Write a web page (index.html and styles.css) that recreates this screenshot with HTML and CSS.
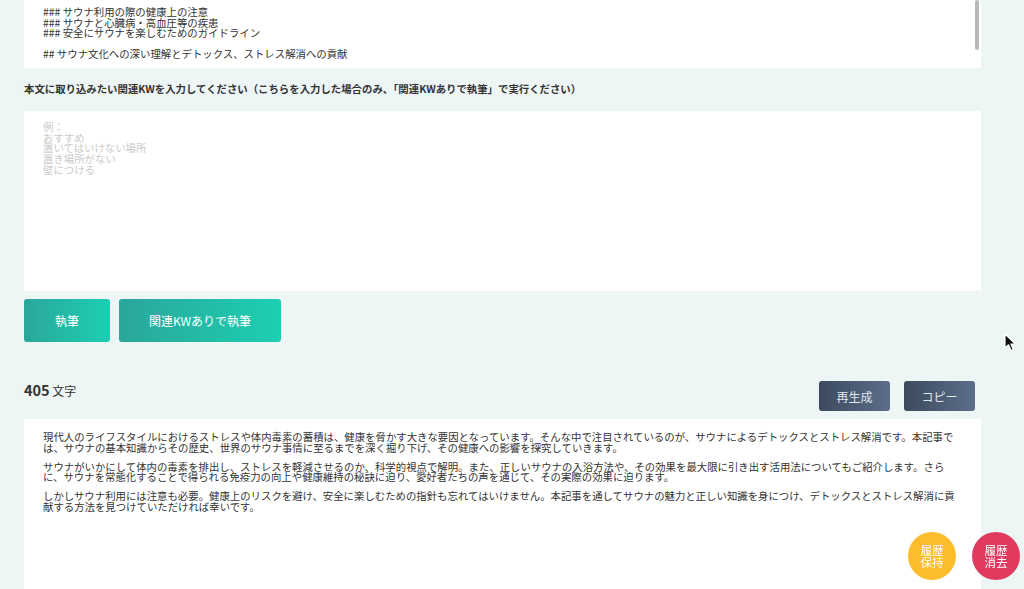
FILE: index.html
```html
<!DOCTYPE html>
<html>
<head>
    <title>記事執筆</title>
    <link rel="stylesheet" href="styles.css">
</head>
<body>
    <div class="container">
        <div class="outline-box">
            <div class="outline-text">### サウナ利用の際の健康上の注意
### サウナと心臓病・高血圧等の疾患
### 安全にサウナを楽しむためのガイドライン

## サウナ文化への深い理解とデトックス、ストレス解消への貢献</div>
            <div class="scroll-thumb"></div>
        </div>

        <label class="kw-label" for="kwInput">本文に取り込みたい関連KWを入力してください（こちらを入力した場合のみ、「関連KWありで執筆」で実行ください）</label>
        <textarea id="kwInput" class="kw-input" placeholder="例：&#10;おすすめ&#10;置いてはいけない場所&#10;置き場所がない&#10;壁につける"></textarea>

        <div class="action-row">
            <button class="btn-primary btn-write">執筆</button>
            <button class="btn-primary btn-write-kw">関連KWありで執筆</button>
        </div>

        <div class="result-header">
            <div class="char-count"><span class="count-num">405</span> 文字</div>
            <div class="result-actions">
                <button class="btn-dark">再生成</button>
                <button class="btn-dark">コピー</button>
            </div>
        </div>

        <div class="result-box">
            <p>現代人のライフスタイルにおけるストレスや体内毒素の蓄積は、健康を脅かす大きな要因となっています。そんな中で注目されているのが、サウナによるデトックスとストレス解消です。本記事では、サウナの基本知識からその歴史、世界のサウナ事情に至るまでを深く掘り下げ、その健康への影響を探究していきます。</p>
            <p>サウナがいかにして体内の毒素を排出し、ストレスを軽減させるのか、科学的視点で解明。また、正しいサウナの入浴方法や、その効果を最大限に引き出す活用法についてもご紹介します。さらに、サウナを常態化することで得られる免疫力の向上や健康維持の秘訣に迫り、愛好者たちの声を通じて、その実際の効果に迫ります。</p>
            <p>しかしサウナ利用には注意も必要。健康上のリスクを避け、安全に楽しむための指針も忘れてはいけません。本記事を通してサウナの魅力と正しい知識を身につけ、デトックスとストレス解消に貢献する方法を見つけていただければ幸いです。</p>
        </div>
    </div>

    <div class="history-buttons">
        <button class="history-btn keep">履歴<br>保持</button>
        <button class="history-btn clear">履歴<br>消去</button>
    </div>

    <svg class="cursor" width="14" height="20" viewBox="0 0 14 20">
        <path d="M1 1 L1 15 L4.5 11.8 L7 17.5 L9.3 16.5 L6.9 11 L11.5 11 Z" fill="#111" stroke="#fff" stroke-width="1.2" stroke-linejoin="round"/>
    </svg>
</body>
</html>
```

FILE: styles.css
```css
* {
    box-sizing: border-box;
    margin: 0;
    padding: 0;
}

body {
    font-family: "Noto Sans CJK JP", "Noto Sans", sans-serif;
    background-color: #edf5f5;
    color: #333333;
    height: 589px;
    overflow: hidden;
}

.container {
    padding: 0 43px 0 24px;
}

.outline-box {
    position: relative;
    height: 68px;
    background: #ffffff;
    padding: 7px 19px;
    overflow: hidden;
}

.outline-text {
    white-space: pre-wrap;
    font-size: 10.4px;
    line-height: 10.5px;
}

.scroll-thumb {
    position: absolute;
    top: 0;
    right: 2px;
    width: 4px;
    height: 50px;
    border-radius: 2px;
    background: #b9b9b9;
}

.kw-label {
    display: block;
    margin-top: 14px;
    font-size: 10.4px;
    line-height: 14px;
    font-weight: bold;
}

.kw-input {
    display: block;
    width: 100%;
    height: 180px;
    margin-top: 15px;
    border: none;
    outline: none;
    resize: none;
    background: #ffffff;
    padding: 11px 19px;
    font-family: inherit;
    font-size: 10.4px;
    line-height: 10.7px;
    color: #333333;
}

.kw-input::placeholder {
    color: #cacaca;
}

.action-row {
    display: flex;
    gap: 9px;
    margin-top: 8px;
}

button {
    font-family: inherit;
    border: none;
    cursor: pointer;
}

.btn-primary {
    height: 43px;
    border-radius: 3px;
    background: linear-gradient(to right, #2ba69a, #1ccfb2);
    color: #ffffff;
    font-size: 12px;
}

.btn-write {
    width: 86px;
}

.btn-write-kw {
    width: 162px;
}

.result-header {
    display: flex;
    justify-content: space-between;
    align-items: flex-start;
    margin-top: 39px;
    padding-right: 6px;
}

.char-count {
    font-size: 12px;
    line-height: 18px;
}

.count-num {
    font-size: 14.5px;
    font-weight: bold;
}

.result-actions {
    display: flex;
    gap: 14px;
}

.btn-dark {
    width: 71px;
    height: 30px;
    border-radius: 3px;
    background: linear-gradient(to right, #3b4a5e, #5c6e8a);
    color: #e3e7ee;
    font-size: 12px;
}

.result-box {
    margin-top: 8px;
    min-height: 220px;
    background: #ffffff;
    padding: 13px 19px;
    font-size: 10.4px;
    line-height: 10.5px;
}

.result-box p {
    margin-bottom: 8.5px;
}

.history-buttons {
    position: fixed;
    right: 4px;
    bottom: 9px;
    display: flex;
    gap: 16px;
}

.history-btn {
    width: 48px;
    height: 48px;
    border-radius: 50%;
    color: #ffffff;
    font-size: 11.5px;
    line-height: 12.5px;
}

.history-btn.keep {
    background: #fbbd2b;
}

.history-btn.clear {
    background: #e03b5e;
}

.cursor {
    position: absolute;
    left: 1004px;
    top: 333px;
}
```
